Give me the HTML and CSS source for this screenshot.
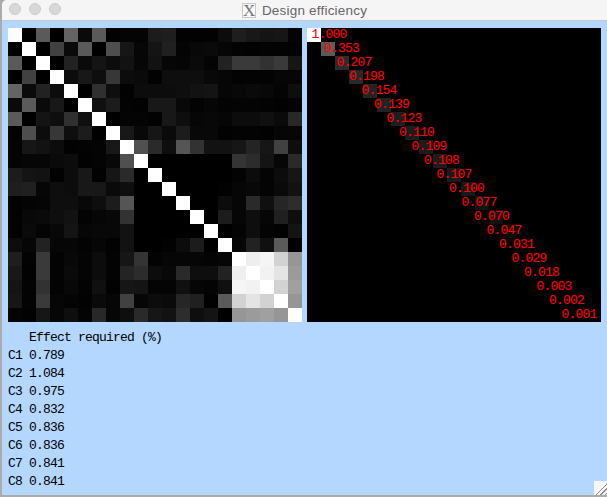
FILE: index.html
```html
<!DOCTYPE html>
<html lang="en">
<head>
    <meta charset="UTF-8">
    <meta name="viewport" content="width=device-width, initial-scale=1.0">
    <title>Design efficiency</title>
    <link rel="stylesheet" href="styles.css">
</head>
<body>
    <div class="window">
        <div class="title-bar">
            <div class="lights">
                <span class="light"></span>
                <span class="light"></span>
                <span class="light"></span>
            </div>
            <div class="title">
                <span class="x-icon">X</span>
                <span>Design efficiency</span>
            </div>
        </div>

        <div class="content">
            <div class="panels">
                <div id="matrix" class="matrix"></div>
                <div id="eigen" class="eigen"></div>
            </div>
            <pre class="effects">   Effect required (%)
C1 0.789
C2 1.084
C3 0.975
C4 0.832
C5 0.836
C6 0.836
C7 0.841
C8 0.841</pre>
            <div class="grip"></div>
        </div>
    </div>

    <script src="script.js"></script>
</body>
</html>
```

FILE: styles.css
```css
html, body {
    margin: 0;
    height: 100%;
    overflow: hidden;
    background-color: #ababab;
}

.window {
    display: flex;
    flex-direction: column;
    width: 605px;
    height: 495px;
    margin-left: 2px;
    border-radius: 5px 0 0 0;
    overflow: hidden;
    background-color: #b3d7ff;
}

.title-bar {
    position: relative;
    display: flex;
    align-items: center;
    justify-content: center;
    flex-shrink: 0;
    height: 20px;
    background-color: #f5f5f5;
    border-bottom: 1px solid #c8c8c8;
}

.lights {
    position: absolute;
    left: 7px;
    top: 3px;
    display: flex;
    gap: 8px;
}

.light {
    width: 10px;
    height: 10px;
    border: 1px solid #cbcbcb;
    border-radius: 50%;
    background-color: #d8d8d8;
}

.title {
    display: flex;
    align-items: center;
    gap: 6px;
    color: #666;
    font-family: 'Liberation Sans', Arial, sans-serif;
    font-size: 13.5px;
    letter-spacing: 0.2px;
}

.x-icon {
    width: 12px;
    height: 13px;
    border: 1px solid #c8c8c8;
    background-color: #f8f8f8;
    color: #777;
    font-family: 'Liberation Serif', serif;
    font-size: 17px;
    line-height: 13px;
    letter-spacing: 0;
    text-align: center;
}

.content {
    position: relative;
    flex: 1;
    padding: 7px 0 0 6px;
}

.panels {
    display: flex;
    gap: 5px;
}

.matrix {
    display: grid;
    grid-template-columns: repeat(21, 14px);
    grid-auto-rows: 14px;
    width: 294px;
    height: 294px;
}

.eigen {
    position: relative;
    width: 294px;
    height: 294px;
    background-color: #000;
}

.eigen-cell {
    position: absolute;
    width: 14px;
    height: 14px;
}

.eigen-label {
    position: absolute;
    color: #f00;
    font-family: 'Liberation Mono', monospace;
    font-size: 13px;
    letter-spacing: -0.8px;
    line-height: 14px;
    -webkit-text-stroke: 0.1px #f00;
}

.effects {
    margin: 7px 0 0 0;
    color: #000;
    font-family: 'Liberation Mono', monospace;
    font-size: 13px;
    letter-spacing: -0.8px;
    line-height: 18px;
}

.grip {
    position: absolute;
    right: 0;
    bottom: 0;
    width: 13px;
    height: 14px;
    background:
        linear-gradient(135deg, #f6f6f6 50%, transparent 50%),
        repeating-linear-gradient(135deg, #f6f6f6 0, #f6f6f6 2px, #8c8c8c 2px, #8c8c8c 3px);
}
```

FILE: script.js
```js
// upper triangle of the matrix, each row starts on the diagonal
const upper = [
    [255,0,90,0,100,10,90,2,4,4,28,30,2,2,2,12,30,24,20,22,4],
    [255,0,65,10,90,0,78,22,6,20,32,4,8,10,6,3,2,3,3,2],
    [255,0,34,10,20,12,18,6,18,6,5,10,4,34,58,58,50,58,22],
    [255,12,24,14,55,12,10,2,14,14,14,8,6,3,3,3,6,6],
    [255,0,48,14,2,12,12,12,14,18,20,6,8,10,8,4,14],
    [255,16,28,3,2,24,24,8,3,6,3,4,4,3,2,4],
    [255,0,4,4,2,24,14,6,8,6,12,12,16,10,40],
    [255,24,8,22,10,28,8,8,2,3,3,2,6,6],
    [255,80,42,14,85,50,18,18,22,36,22,65,14],
    [255,0,0,0,0,0,0,52,44,20,6,42],
    [255,0,0,0,0,0,3,12,4,12,22],
    [255,0,0,0,2,6,8,4,10,18],
    [255,0,0,12,6,42,16,38,45],
    [255,0,28,6,14,6,32,14],
    [255,0,4,14,4,2,20],
    [255,6,34,16,90,0],
    [255,238,245,210,150],
    [255,242,228,155],
    [255,210,160],
    [255,150],
    [255]
];

// value, gray level of its cell
const eigen = [
    ['1.000',255], ['0.353',90], ['0.207',44], ['0.198',40], ['0.154',36],
    ['0.139',34], ['0.123',30], ['0.110',28], ['0.109',28], ['0.108',28],
    ['0.107',26], ['0.100',24], ['0.077',20], ['0.070',18], ['0.047',12],
    ['0.031',6], ['0.029',5], ['0.018',3], ['0.003',0], ['0.002',0], ['0.001',0]
];

const matrix = document.getElementById('matrix');
for (let r = 0; r < 21; r++) {
    for (let c = 0; c < 21; c++) {
        const v = c >= r ? upper[r][c - r] : upper[c][r - c];
        const cell = document.createElement('div');
        cell.style.backgroundColor = `rgb(${v},${v},${v})`;
        matrix.appendChild(cell);
    }
}

const panel = document.getElementById('eigen');
eigen.forEach(([text, v], i) => {
    const cell = document.createElement('div');
    cell.className = 'eigen-cell';
    cell.style.left = `${i * 14}px`;
    cell.style.top = `${i * 14}px`;
    cell.style.backgroundColor = `rgb(${v},${v},${v})`;
    panel.appendChild(cell);

    // labels drift left of the cells, they step 12.5px per row
    const label = document.createElement('span');
    label.className = 'eigen-label';
    label.textContent = text;
    label.style.left = `${4.5 + i * 12.5}px`;
    label.style.top = `${i * 14}px`;
    panel.appendChild(label);
});
```
